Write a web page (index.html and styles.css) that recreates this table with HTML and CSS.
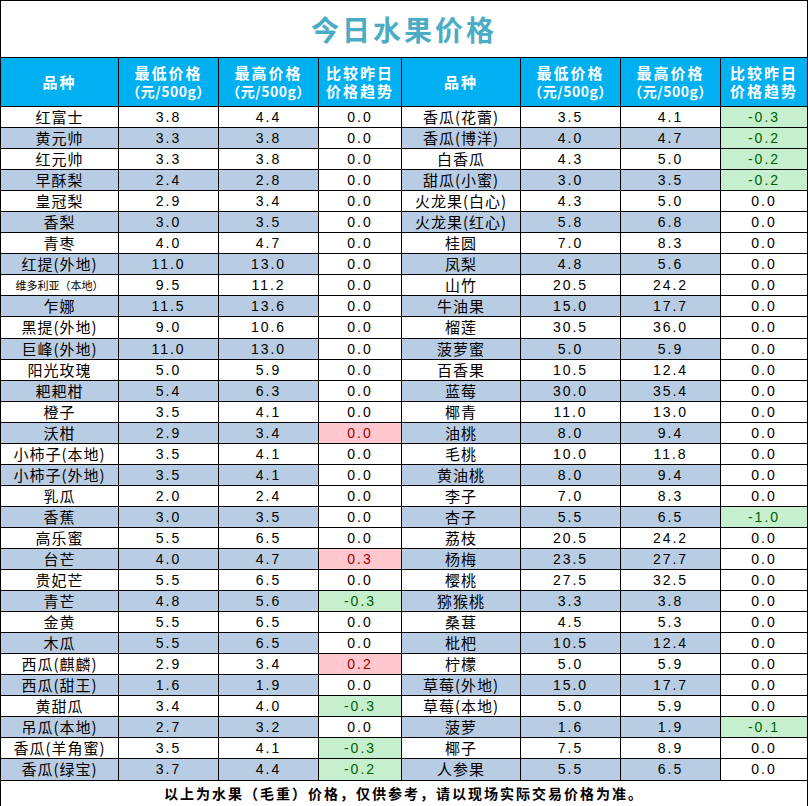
FILE: index.html
```html
<!DOCTYPE html>
<html lang="zh-CN">
<head>
<meta charset="utf-8">
<title>今日水果价格</title>
<link rel="stylesheet" href="styles.css">
</head>
<body>
<table class="sheet">
<colgroup>
<col class="c-name-l"><col class="c-num"><col class="c-num"><col class="c-trend-l">
<col class="c-name-r"><col class="c-num"><col class="c-num"><col class="c-trend-r">
</colgroup>
<thead>
<tr class="title-row"><th colspan="8" class="title">今日水果价格</th></tr>
<tr class="head-row">
<th class="h">品种</th>
<th class="h"><span class="l1">最低价格</span><span class="l2">（元/500g）</span></th>
<th class="h"><span class="l1">最高价格</span><span class="l2">（元/500g）</span></th>
<th class="h"><span class="l1">比较昨日</span><span class="l1">价格趋势</span></th>
<th class="h">品种</th>
<th class="h"><span class="l1">最低价格</span><span class="l2">（元/500g）</span></th>
<th class="h"><span class="l1">最高价格</span><span class="l2">（元/500g）</span></th>
<th class="h"><span class="l1">比较昨日</span><span class="l1">价格趋势</span></th>
</tr>
</thead>
<tbody>
<tr><td class="n">红富士</td><td class="v">3.8</td><td class="v">4.4</td><td class="v">0.0</td><td class="n">香瓜(花蕾)</td><td class="v">3.5</td><td class="v">4.1</td><td class="v g">-0.3</td></tr>
<tr class="alt"><td class="n">黄元帅</td><td class="v">3.3</td><td class="v">3.8</td><td class="v">0.0</td><td class="n">香瓜(博洋)</td><td class="v">4.0</td><td class="v">4.7</td><td class="v g">-0.2</td></tr>
<tr><td class="n">红元帅</td><td class="v">3.3</td><td class="v">3.8</td><td class="v">0.0</td><td class="n">白香瓜</td><td class="v">4.3</td><td class="v">5.0</td><td class="v g">-0.2</td></tr>
<tr class="alt"><td class="n">早酥梨</td><td class="v">2.4</td><td class="v">2.8</td><td class="v">0.0</td><td class="n">甜瓜(小蜜)</td><td class="v">3.0</td><td class="v">3.5</td><td class="v g">-0.2</td></tr>
<tr><td class="n">皇冠梨</td><td class="v">2.9</td><td class="v">3.4</td><td class="v">0.0</td><td class="n">火龙果(白心)</td><td class="v">4.3</td><td class="v">5.0</td><td class="v">0.0</td></tr>
<tr class="alt"><td class="n">香梨</td><td class="v">3.0</td><td class="v">3.5</td><td class="v">0.0</td><td class="n">火龙果(红心)</td><td class="v">5.8</td><td class="v">6.8</td><td class="v">0.0</td></tr>
<tr><td class="n">青枣</td><td class="v">4.0</td><td class="v">4.7</td><td class="v">0.0</td><td class="n">桂圆</td><td class="v">7.0</td><td class="v">8.3</td><td class="v">0.0</td></tr>
<tr class="alt"><td class="n">红提(外地)</td><td class="v">11.0</td><td class="v">13.0</td><td class="v">0.0</td><td class="n">凤梨</td><td class="v">4.8</td><td class="v">5.6</td><td class="v">0.0</td></tr>
<tr><td class="n small">维多利亚（本地）</td><td class="v">9.5</td><td class="v">11.2</td><td class="v">0.0</td><td class="n">山竹</td><td class="v">20.5</td><td class="v">24.2</td><td class="v">0.0</td></tr>
<tr class="alt"><td class="n">乍娜</td><td class="v">11.5</td><td class="v">13.6</td><td class="v">0.0</td><td class="n">牛油果</td><td class="v">15.0</td><td class="v">17.7</td><td class="v">0.0</td></tr>
<tr><td class="n">黑提(外地)</td><td class="v">9.0</td><td class="v">10.6</td><td class="v">0.0</td><td class="n">榴莲</td><td class="v">30.5</td><td class="v">36.0</td><td class="v">0.0</td></tr>
<tr class="alt"><td class="n">巨峰(外地)</td><td class="v">11.0</td><td class="v">13.0</td><td class="v">0.0</td><td class="n">菠萝蜜</td><td class="v">5.0</td><td class="v">5.9</td><td class="v">0.0</td></tr>
<tr><td class="n">阳光玫瑰</td><td class="v">5.0</td><td class="v">5.9</td><td class="v">0.0</td><td class="n">百香果</td><td class="v">10.5</td><td class="v">12.4</td><td class="v">0.0</td></tr>
<tr class="alt"><td class="n">耙耙柑</td><td class="v">5.4</td><td class="v">6.3</td><td class="v">0.0</td><td class="n">蓝莓</td><td class="v">30.0</td><td class="v">35.4</td><td class="v">0.0</td></tr>
<tr><td class="n">橙子</td><td class="v">3.5</td><td class="v">4.1</td><td class="v">0.0</td><td class="n">椰青</td><td class="v">11.0</td><td class="v">13.0</td><td class="v">0.0</td></tr>
<tr class="alt"><td class="n">沃柑</td><td class="v">2.9</td><td class="v">3.4</td><td class="v r">0.0</td><td class="n">油桃</td><td class="v">8.0</td><td class="v">9.4</td><td class="v">0.0</td></tr>
<tr><td class="n">小柿子(本地)</td><td class="v">3.5</td><td class="v">4.1</td><td class="v">0.0</td><td class="n">毛桃</td><td class="v">10.0</td><td class="v">11.8</td><td class="v">0.0</td></tr>
<tr class="alt"><td class="n">小柿子(外地)</td><td class="v">3.5</td><td class="v">4.1</td><td class="v">0.0</td><td class="n">黄油桃</td><td class="v">8.0</td><td class="v">9.4</td><td class="v">0.0</td></tr>
<tr><td class="n">乳瓜</td><td class="v">2.0</td><td class="v">2.4</td><td class="v">0.0</td><td class="n">李子</td><td class="v">7.0</td><td class="v">8.3</td><td class="v">0.0</td></tr>
<tr class="alt"><td class="n">香蕉</td><td class="v">3.0</td><td class="v">3.5</td><td class="v">0.0</td><td class="n">杏子</td><td class="v">5.5</td><td class="v">6.5</td><td class="v g">-1.0</td></tr>
<tr><td class="n">高乐蜜</td><td class="v">5.5</td><td class="v">6.5</td><td class="v">0.0</td><td class="n">荔枝</td><td class="v">20.5</td><td class="v">24.2</td><td class="v">0.0</td></tr>
<tr class="alt"><td class="n">台芒</td><td class="v">4.0</td><td class="v">4.7</td><td class="v r">0.3</td><td class="n">杨梅</td><td class="v">23.5</td><td class="v">27.7</td><td class="v">0.0</td></tr>
<tr><td class="n">贵妃芒</td><td class="v">5.5</td><td class="v">6.5</td><td class="v">0.0</td><td class="n">樱桃</td><td class="v">27.5</td><td class="v">32.5</td><td class="v">0.0</td></tr>
<tr class="alt"><td class="n">青芒</td><td class="v">4.8</td><td class="v">5.6</td><td class="v g">-0.3</td><td class="n">猕猴桃</td><td class="v">3.3</td><td class="v">3.8</td><td class="v">0.0</td></tr>
<tr><td class="n">金黄</td><td class="v">5.5</td><td class="v">6.5</td><td class="v">0.0</td><td class="n">桑葚</td><td class="v">4.5</td><td class="v">5.3</td><td class="v">0.0</td></tr>
<tr class="alt"><td class="n">木瓜</td><td class="v">5.5</td><td class="v">6.5</td><td class="v">0.0</td><td class="n">枇杷</td><td class="v">10.5</td><td class="v">12.4</td><td class="v">0.0</td></tr>
<tr><td class="n">西瓜(麒麟)</td><td class="v">2.9</td><td class="v">3.4</td><td class="v r">0.2</td><td class="n">柠檬</td><td class="v">5.0</td><td class="v">5.9</td><td class="v">0.0</td></tr>
<tr class="alt"><td class="n">西瓜(甜王)</td><td class="v">1.6</td><td class="v">1.9</td><td class="v">0.0</td><td class="n">草莓(外地)</td><td class="v">15.0</td><td class="v">17.7</td><td class="v">0.0</td></tr>
<tr><td class="n">黄甜瓜</td><td class="v">3.4</td><td class="v">4.0</td><td class="v g">-0.3</td><td class="n">草莓(本地)</td><td class="v">5.0</td><td class="v">5.9</td><td class="v">0.0</td></tr>
<tr class="alt"><td class="n">吊瓜(本地)</td><td class="v">2.7</td><td class="v">3.2</td><td class="v">0.0</td><td class="n">菠萝</td><td class="v">1.6</td><td class="v">1.9</td><td class="v g">-0.1</td></tr>
<tr><td class="n">香瓜(羊角蜜)</td><td class="v">3.5</td><td class="v">4.1</td><td class="v g">-0.3</td><td class="n">椰子</td><td class="v">7.5</td><td class="v">8.9</td><td class="v">0.0</td></tr>
<tr class="alt"><td class="n">香瓜(绿宝)</td><td class="v">3.7</td><td class="v">4.4</td><td class="v g">-0.2</td><td class="n">人参果</td><td class="v">5.5</td><td class="v">6.5</td><td class="v">0.0</td></tr>
</tbody>
<tfoot>
<tr class="foot-row"><td colspan="8" class="foot">以上为水果（毛重）价格，仅供参考，请以现场实际交易价格为准。</td></tr>
</tfoot>
</table>
</body>
</html>
```
FILE: styles.css
```css
html, body {
  margin: 0;
  padding: 0;
  background: #ffffff;
}

.sheet {
  border-collapse: collapse;
  table-layout: fixed;
  width: 807px;
  font-family: "Noto Sans CJK SC", "Liberation Sans", sans-serif;
  color: #000;
}

.c-name-l { width: 118px; }
.c-num { width: 100px; }
.c-trend-l { width: 83px; }
.c-name-r { width: 119px; }
.c-trend-r { width: 87px; }

.sheet th, .sheet td {
  border: 1px solid #000;
  padding: 0;
  text-align: center;
  vertical-align: middle;
  white-space: nowrap;
  overflow: hidden;
}

.title-row { height: 57px; }
.title {
  font-size: 28px;
  font-weight: 700;
  color: #4bacc6;
  letter-spacing: 3px;
  line-height: 30px;
  padding-top: 2px;
}

.head-row { height: 49px; }
.h {
  background: #00b0f0;
  color: #ffffff;
  font-size: 15px;
  font-weight: 700;
  letter-spacing: 2px;
  line-height: 18px;
}
.h .l1, .h .l2 {
  display: block;
  height: 18px;
  line-height: 18px;
}
.h .l2 {
  font-size: 14px;
  letter-spacing: 0.5px;
}

tbody tr { height: 21.06px; }

.n {
  font-size: 15px;
  letter-spacing: 1px;
  line-height: 18px;
}
.n.small {
  font-size: 11px;
  letter-spacing: 0;
}

.v {
  font-family: "Liberation Sans", "Noto Sans CJK SC", sans-serif;
  font-size: 14px;
  letter-spacing: 2px;
  line-height: 18px;
  padding-left: 2px;
}

.alt td:nth-child(-n+3),
.alt td:nth-child(n+5):nth-child(-n+7) {
  background: #b8cce4;
}

.sheet td.g {
  background: #c6efce;
  color: #006100;
}
.sheet td.r {
  background: #ffc7ce;
  color: #9c0006;
}

.foot-row { height: 26px; }
.foot {
  font-size: 14px;
  font-weight: 700;
  letter-spacing: 2px;
  line-height: 18px;
}
```
